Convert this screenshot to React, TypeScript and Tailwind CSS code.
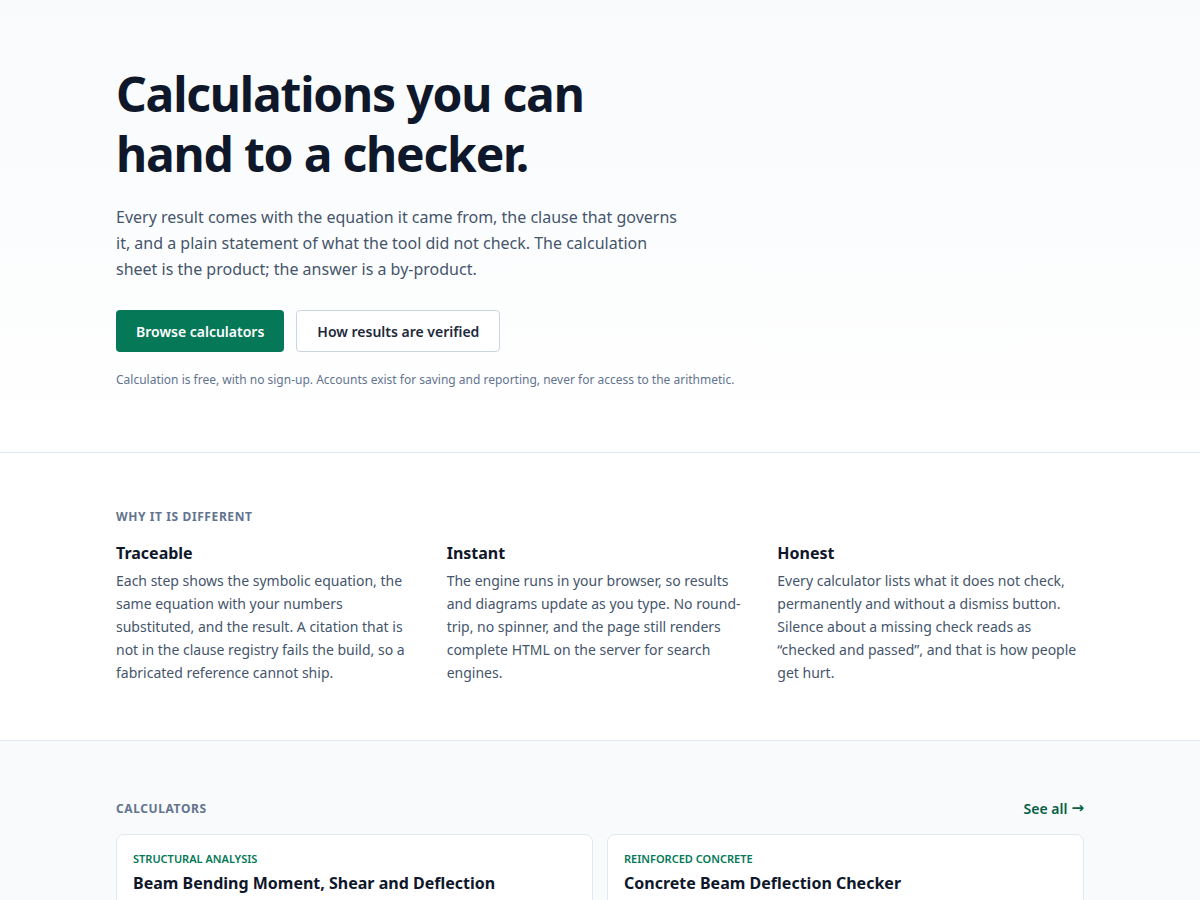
const FEATURES = [
  {
    title: 'Traceable',
    body: 'Each step shows the symbolic equation, the same equation with your numbers substituted, and the result. A citation that is not in the clause registry fails the build, so a fabricated reference cannot ship.',
  },
  {
    title: 'Instant',
    body: 'The engine runs in your browser, so results and diagrams update as you type. No round-trip, no spinner, and the page still renders complete HTML on the server for search engines.',
  },
  {
    title: 'Honest',
    body: 'Every calculator lists what it does not check, permanently and without a dismiss button. Silence about a missing check reads as \u201cchecked and passed\u201d, and that is how people get hurt.',
  },
]

const CALCULATORS = [
  { category: 'Structural analysis', title: 'Beam Bending Moment, Shear and Deflection' },
  { category: 'Reinforced concrete', title: 'Concrete Beam Deflection Checker' },
]

export default function App() {
  return (
    <div className="min-h-screen bg-white text-slate-900 font-['Noto_Sans',sans-serif]">
      {/* Hero */}
      <section className="bg-gradient-to-b from-slate-50 to-white border-b border-slate-200">
        <div className="mx-auto max-w-[1016px] px-6 pt-[64px] pb-[63px]">
          <h1 className="text-[48px] leading-[60px] font-bold tracking-[-0.025em] text-[#0f172a]">
            Calculations you can
            <br />
            hand to a checker.
          </h1>
          <p className="mt-[20px] max-w-[570px] text-[16px] leading-[26px] text-slate-600">
            Every result comes with the equation it came from, the clause that governs it, and a
            plain statement of what the tool did not check. The calculation sheet is the product;
            the answer is a by-product.
          </p>
          <div className="mt-[28px] flex gap-3">
            <button className="h-[42px] px-5 rounded-[4px] bg-[#047857] text-white text-[14px] font-semibold">
              Browse calculators
            </button>
            <button className="h-[42px] px-5 rounded-[4px] bg-white border border-slate-300 text-slate-800 text-[14px] font-semibold">
              How results are verified
            </button>
          </div>
          <p className="mt-[19px] text-[12px] leading-[18px] text-slate-500">
            Calculation is free, with no sign-up. Accounts exist for saving and reporting, never for
            access to the arithmetic.
          </p>
        </div>
      </section>

      {/* Why it is different */}
      <section className="border-b border-slate-200">
        <div className="mx-auto max-w-[1016px] px-6 pt-[56px] pb-[56px]">
          <h2 className="text-[12px] leading-[16px] font-bold tracking-[0.05em] uppercase text-slate-500">
            Why it is different
          </h2>
          <div className="mt-[16px] grid grid-cols-3 gap-6">
            {FEATURES.map(f => (
              <div key={f.title}>
                <h3 className="text-[16px] leading-[24px] font-bold text-slate-900">{f.title}</h3>
                <p className="mt-[4px] text-[14px] leading-[23px] text-slate-600">{f.body}</p>
              </div>
            ))}
          </div>
        </div>
      </section>

      {/* Calculators */}
      <section className="bg-slate-50">
        <div className="mx-auto max-w-[1016px] px-6 pt-[57px] pb-16">
          <div className="flex items-center justify-between">
            <h2 className="text-[12px] leading-[16px] font-bold tracking-[0.05em] uppercase text-slate-500">
              Calculators
            </h2>
            <a className="flex items-center gap-1 text-[14px] font-semibold text-[#065f46]">
              See all
              <span className="font-['DejaVu_Sans',sans-serif] text-[15px] font-bold leading-none">→</span>
            </a>
          </div>
          <div className="mt-[15px] grid grid-cols-2 gap-[14px]">
            {CALCULATORS.map(c => (
              <div key={c.title} className="rounded-lg border border-slate-200 bg-white px-4 pt-[17px] pb-5">
                <div className="text-[11px] leading-[14px] font-semibold uppercase text-[#047857]">
                  {c.category}
                </div>
                <div className="mt-[6px] text-[16px] leading-[22px] font-bold text-slate-900">
                  {c.title}
                </div>
              </div>
            ))}
          </div>
        </div>
      </section>
    </div>
  )
}
